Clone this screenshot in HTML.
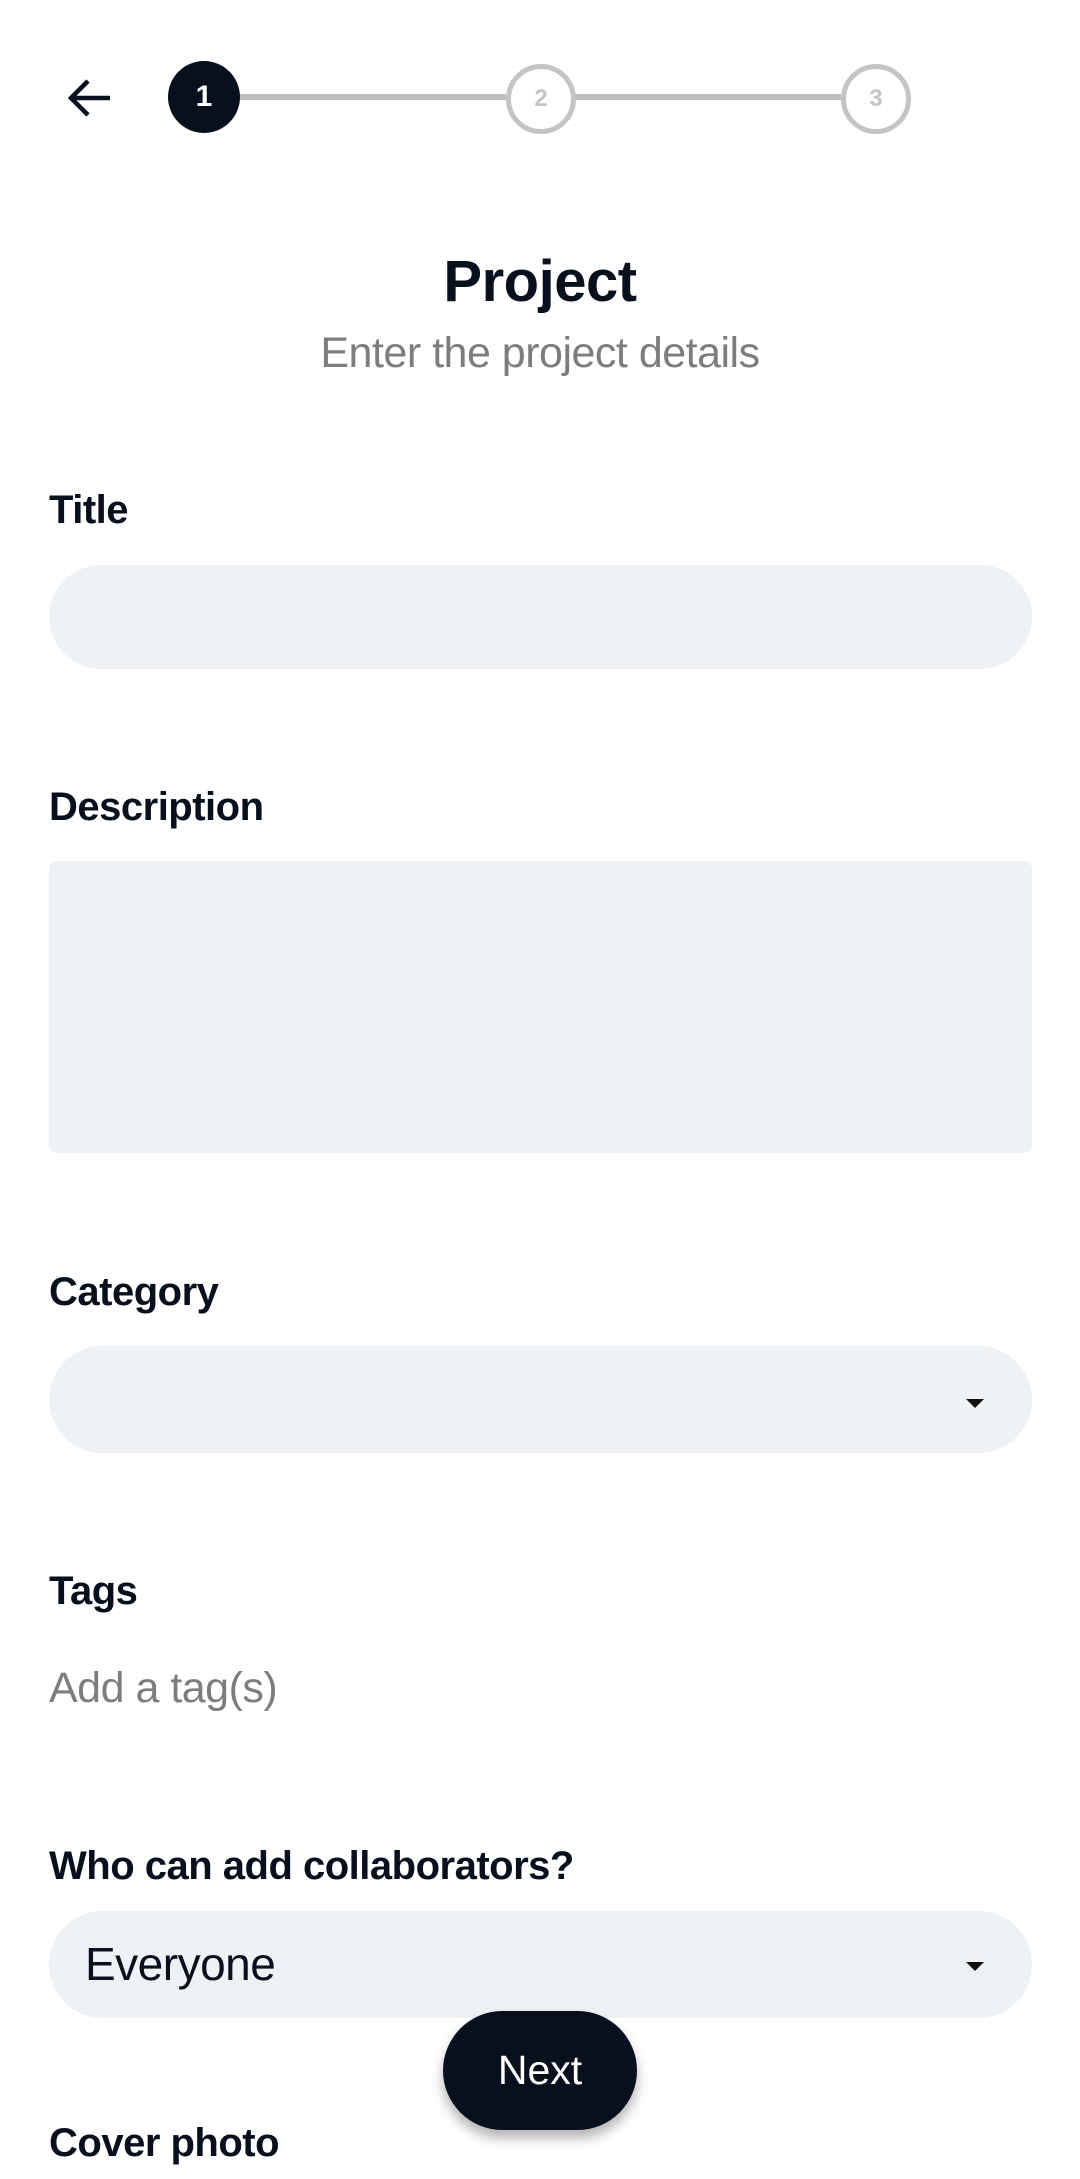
<!DOCTYPE html>
<html><head><meta charset="utf-8">
<style>
html,body{margin:0;padding:0;background:#fff;}
body{width:1080px;height:2179px;position:relative;overflow:hidden;font-family:"Liberation Sans",sans-serif;color:#07101c;}
.abs{position:absolute;}
.lbl{position:absolute;left:49px;font-weight:bold;font-size:40px;letter-spacing:-0.5px;line-height:1;}
.field{position:absolute;left:49px;width:983px;background:#eef2f4;}
.caret{position:absolute;width:0;height:0;border-left:9px solid transparent;border-right:9px solid transparent;border-top:9px solid #111;}
</style></head><body>
<svg class="abs" style="left:66px;top:76px" width="48" height="44" viewBox="0 0 48 44">
<path d="M44 22H6M22 5L5 22L22 39" fill="none" stroke="#07101c" stroke-width="4.5"/>
</svg>
<div class="abs" style="left:238px;top:94px;width:268px;height:6px;background:#bdbdbd"></div>
<div class="abs" style="left:573px;top:94px;width:268px;height:6px;background:#bdbdbd"></div>
<div class="abs" style="left:168px;top:61px;width:72px;height:72px;border-radius:50%;background:#07101c;color:#fff;font-weight:bold;font-size:30px;text-align:center;line-height:72px">1</div>
<div class="abs" style="left:506px;top:64px;width:60px;height:60px;border-radius:50%;border:5px solid #c4c4c4;background:#fff;color:#c4c4c4;font-weight:bold;font-size:24px;text-align:center;line-height:60px">2</div>
<div class="abs" style="left:841px;top:64px;width:60px;height:60px;border-radius:50%;border:5px solid #c4c4c4;background:#fff;color:#c4c4c4;font-weight:bold;font-size:24px;text-align:center;line-height:60px">3</div>

<div class="abs" style="left:0;width:1080px;top:250px;text-align:center;font-weight:bold;font-size:58px;line-height:64px;letter-spacing:-0.5px">Project</div>
<div class="abs" style="left:0;width:1080px;top:329px;text-align:center;font-size:43px;line-height:48px;color:#7d7d7d;letter-spacing:-0.5px">Enter the project details</div>

<div class="lbl" style="top:490px">Title</div>
<div class="field" style="top:565px;height:104px;border-radius:52px"></div>

<div class="lbl" style="top:787px">Description</div>
<div class="field" style="top:861px;height:292px;border-radius:8px"></div>

<div class="lbl" style="top:1272px">Category</div>
<div class="field" style="top:1346px;height:107px;border-radius:54px"></div>
<div class="caret" style="left:966px;top:1399px"></div>

<div class="lbl" style="top:1571px">Tags</div>
<div class="abs" style="left:49px;top:1665px;font-size:43px;line-height:46px;color:#7d7d7d;letter-spacing:-0.5px">Add a tag(s)</div>

<div class="lbl" style="top:1846px">Who can add collaborators?</div>
<div class="field" style="top:1911px;height:107px;border-radius:54px"></div>
<div class="abs" style="left:85px;top:1939px;font-size:46px;line-height:50px;color:#07101c;letter-spacing:-0.5px">Everyone</div>
<div class="caret" style="left:966px;top:1962px"></div>

<div class="abs" style="left:443px;top:2011px;width:194px;height:119px;border-radius:60px;background:#07101c;color:#fff;font-size:41px;text-align:center;line-height:119px;box-shadow:0 8px 12px rgba(0,0,0,0.3)">Next</div>

<div class="lbl" style="top:2123px">Cover photo</div>
</body></html>
